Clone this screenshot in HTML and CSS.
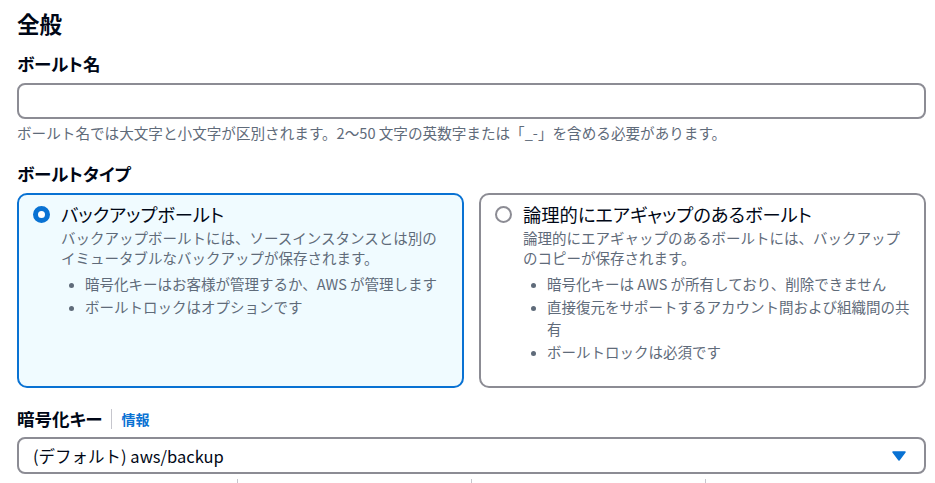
FILE: index.html
```html
<!DOCTYPE html>
<html lang="ja">
<head>
<meta charset="UTF-8">
<meta name="viewport" content="width=device-width, initial-scale=1.0">
<title>ボールトを作成</title>
<link rel="stylesheet" href="styles.css">
</head>
<body>
<div class="page">
  <h2 class="section-title">全般</h2>

  <div class="field">
    <label class="field-label" for="vaultName">ボールト名</label>
    <input class="text-input" type="text" id="vaultName" name="vaultName">
    <div class="hint">ボールト名では大文字と小文字が区別されます。2～50 文字の英数字または「_-」を含める必要があります。</div>
  </div>

  <div class="field field-type">
    <div class="field-label">ボールトタイプ</div>
    <div class="tiles">
      <label class="tile selected">
        <span class="radio checked"></span>
        <span class="tile-body">
          <span class="tile-title">バックアップボールト</span>
          <span class="tile-desc">バックアップボールトには、ソースインスタンスとは別のイミュータブルなバックアップが保存されます。</span>
          <ul class="tile-list">
            <li>暗号化キーはお客様が管理するか、AWS が管理します</li>
            <li>ボールトロックはオプションです</li>
          </ul>
        </span>
      </label>
      <label class="tile">
        <span class="radio"></span>
        <span class="tile-body">
          <span class="tile-title">論理的にエアギャップのあるボールト</span>
          <span class="tile-desc">論理的にエアギャップのあるボールトには、バックアップのコピーが保存されます。</span>
          <ul class="tile-list">
            <li>暗号化キーは AWS が所有しており、削除できません</li>
            <li>直接復元をサポートするアカウント間および組織間の共有</li>
            <li>ボールトロックは必須です</li>
          </ul>
        </span>
      </label>
    </div>
  </div>

  <div class="field field-key">
    <div class="field-label">暗号化キー<span class="sep"></span><a class="info" href="#">情報</a></div>
    <div class="select">
      <span>(デフォルト) aws/backup</span>
      <svg class="caret" width="14" height="10" viewBox="0 0 14 10"><path d="M1 1h12L7 9z" fill="#0972d3" stroke="#0972d3" stroke-width="1.5" stroke-linejoin="round"/></svg>
    </div>
  </div>

  <div class="columns">
    <div></div><div></div><div></div><div></div>
  </div>
</div>
</body>
</html>
```

FILE: styles.css
```css
/* Create vault - general section */
body {
  margin: 0;
  font-family: "Noto Sans CJK JP", "Noto Sans", sans-serif;
  color: #000716;
  background: #fff;
}
.page {
  padding: 8px 9px 0 17px;
}
.section-title {
  margin: 0;
  font-size: 22.5px;
  line-height: 30px;
  font-weight: 700;
}
.field {
  margin-top: 14px;
}
.field-label {
  display: flex;
  align-items: center;
  font-size: 17.5px;
  line-height: 24px;
  font-weight: 700;
  font-feature-settings: "palt";
}
.text-input {
  display: block;
  box-sizing: border-box;
  width: 100%;
  height: 36px;
  margin-top: 7px;
  border: 2px solid #8c8c94;
  border-radius: 8px;
  background: #fff;
}
.hint {
  margin-top: 4px;
  font-size: 14.6px;
  line-height: 20px;
  color: #5f6b7a;
}
.field-type {
  margin-top: 19px;
}
.tiles {
  display: grid;
  grid-template-columns: 1fr 1fr;
  gap: 15px;
  margin-top: 7px;
}
.tile {
  display: flex;
  gap: 11px;
  padding: 7px 12px 23px 14px;
  border: 2px solid #8c8c94;
  border-radius: 10px;
  background: #fff;
  cursor: pointer;
}
.tile.selected {
  border-color: #0972d3;
  background: #f0fbff;
}
.radio {
  flex: none;
  box-sizing: border-box;
  width: 17px;
  height: 17px;
  margin-top: 4px;
  border: 2px solid #8c8c94;
  border-radius: 50%;
  background: #fff;
}
.radio.checked {
  border: 5px solid #0972d3;
}
.tile-body {
  display: block;
}
.tile-title {
  display: block;
  font-size: 18.3px;
  line-height: 24px;
  font-feature-settings: "palt";
}
.tile-desc {
  display: block;
  margin-top: 2px;
  font-size: 14.5px;
  line-height: 20px;
  color: #5f6b7a;
}
.tile-list {
  margin: 5px 0 0;
  padding-left: 24px;
  font-size: 14.5px;
  line-height: 22px;
  color: #5f6b7a;
}
.tile-list li + li {
  margin-top: 1px;
}
.tile-list li::marker {
  font-size: 12px;
}
.field-key {
  margin-top: 19px;
}
.sep {
  display: inline-block;
  width: 1px;
  height: 20px;
  margin: 0 10px 0 8px;
  background: #c6c6cd;
}
.info {
  font-size: 14px;
  color: #0972d3;
  text-decoration: none;
}
.select {
  display: flex;
  align-items: center;
  justify-content: space-between;
  box-sizing: border-box;
  height: 37px;
  margin-top: 6px;
  padding: 0 18px 0 14px;
  border: 2px solid #8c8c94;
  border-radius: 8px;
  font-size: 16.5px;
}
.columns {
  display: grid;
  grid-template-columns: 220px 234px 234px 1fr;
  height: 20px;
  margin-top: 5px;
}
.columns div + div {
  border-left: 1px solid #c6c6cd;
}
```
